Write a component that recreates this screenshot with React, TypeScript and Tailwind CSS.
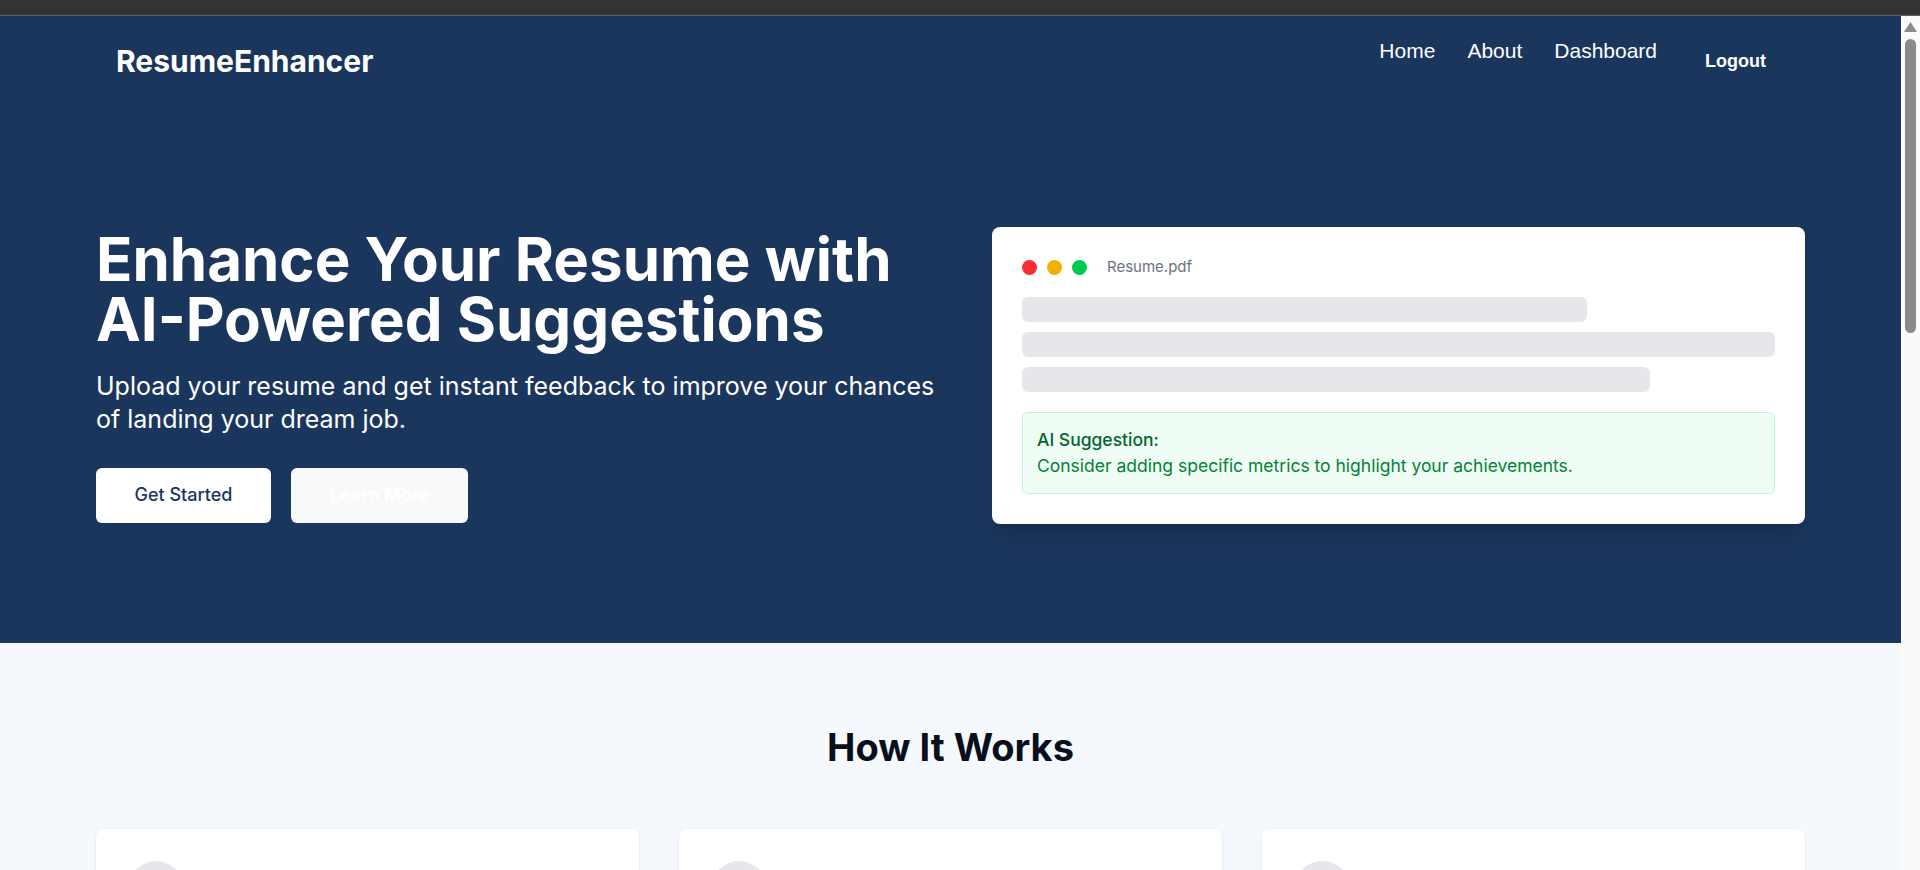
import React from "react";

const bars = ["w-3/4", "w-full", "w-5/6"];

function Scrollbar() {
  return (
    <div className="relative w-[19px] shrink-0 bg-[#fafafa]">
      <svg className="absolute left-[3px] top-[6px]" width="13" height="10" viewBox="0 0 13 10">
        <polygon points="6.5,0 13,10 0,10" fill="#8a8a8a" />
      </svg>
      <div className="absolute left-[4px] top-[23px] h-[294px] w-[11px] rounded-full bg-[#8a8a8a]" />
    </div>
  );
}

function Navbar() {
  return (
    <nav className="flex h-[90px] items-center justify-between pl-[116px] pr-[135px]">
      <a href="#" className="text-3xl font-bold text-white">ResumeEnhancer</a>
      <div className="flex items-center">
        <ul className="mb-[21px] flex gap-8 text-[21px] text-white [font-family:'Liberation_Sans',Arial,sans-serif]">
          <li><a href="#">Home</a></li>
          <li><a href="#">About</a></li>
          <li><a href="#">Dashboard</a></li>
        </ul>
        <button className="ml-[48px] text-[18px] font-bold text-white [font-family:'Liberation_Sans',Arial,sans-serif]">
          Logout
        </button>
      </div>
    </nav>
  );
}

function ResumePreview() {
  return (
    <div className="w-[813px] shrink-0 rounded-lg bg-white p-[30px] shadow-xl">
      <div className="mb-5 flex h-5 items-center">
        <span className="h-[15px] w-[15px] rounded-full bg-red-500" />
        <span className="ml-[10px] h-[15px] w-[15px] rounded-full bg-yellow-500" />
        <span className="ml-[10px] h-[15px] w-[15px] rounded-full bg-green-500" />
        <span className="ml-5 text-[15px] text-gray-500">Resume.pdf</span>
      </div>
      <div className="flex flex-col gap-[10px]">
        {bars.map((w, i) => (
          <div key={i} className={`h-[25px] rounded-md bg-gray-200 ${w}`} />
        ))}
      </div>
      <div className="mt-5 rounded-md border border-green-200 bg-green-50 px-3.5 py-[15px]">
        <p className="text-[17.5px] font-medium leading-6 text-green-800">AI Suggestion:</p>
        <p className="mt-0.5 text-[17.5px] leading-6 text-green-700">
          Consider adding specific metrics to highlight your achievements.
        </p>
      </div>
    </div>
  );
}

function Hero() {
  return (
    <section className="flex items-center gap-[42px] px-24 pt-[121px] pb-[119px]">
      <div className="min-w-0 flex-1">
        <h1 className="text-6xl leading-none font-bold text-white">
          Enhance Your Resume with AI-Powered Suggestions
        </h1>
        <p className="mt-[21px] text-[25px] leading-[33px] text-white">
          Upload your resume and get instant feedback to improve your chances of landing your dream job.
        </p>
        <div className="mt-[32px] flex gap-5">
          <button className="h-[55px] w-[175px] rounded-md bg-white text-lg font-medium text-[#1b365d]">
            Get Started
          </button>
          <button className="h-[55px] w-[177px] rounded-md bg-[#f8f9fb] text-lg font-semibold text-white">
            Learn More
          </button>
        </div>
      </div>
      <ResumePreview />
    </section>
  );
}

function Steps() {
  return (
    <section className="px-24 pt-[84px]">
      <h2 className="mb-[62px] text-center text-[38px] leading-10 font-bold text-[#0a0f1c]">How It Works</h2>
      <div className="grid grid-cols-3 gap-10">
        {[1, 2, 3].map((n) => (
          <div key={n} className="h-[200px] rounded-lg bg-white p-8 shadow-sm">
            <div className="flex h-14 w-14 items-center justify-center rounded-full bg-gray-200 text-xl font-bold text-[#1b365d]">
              {n}
            </div>
          </div>
        ))}
      </div>
    </section>
  );
}

export default function App() {
  return (
    <div className="flex h-[870px] flex-col overflow-hidden bg-[#f5f8fc] [font-family:Inter,'Noto_Sans',sans-serif]">
      <div className="h-4 shrink-0 border-b border-[#5e5e5e] bg-[#333333]" />
      <div className="flex min-h-0 flex-1">
        <main className="min-w-0 flex-1 overflow-hidden">
          <div className="bg-[#1b365d]">
            <Navbar />
            <Hero />
          </div>
          <Steps />
        </main>
        <Scrollbar />
      </div>
    </div>
  );
}
